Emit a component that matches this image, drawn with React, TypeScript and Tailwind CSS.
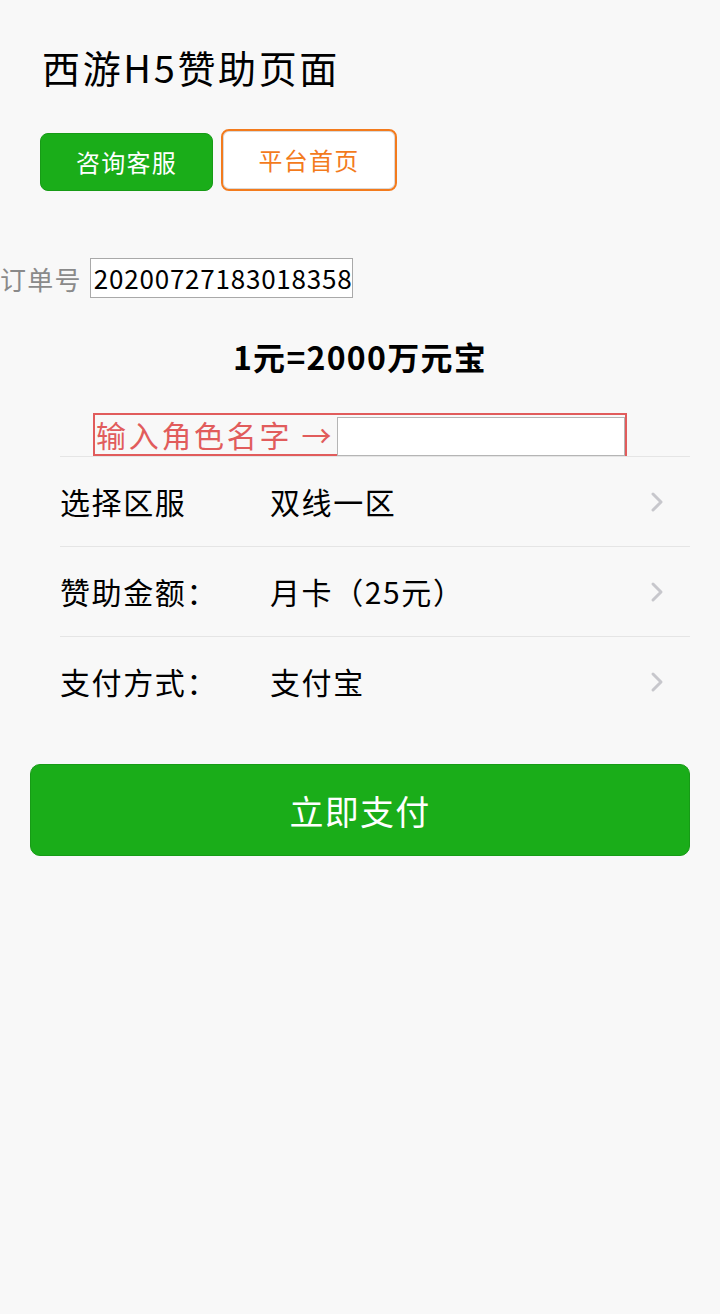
const ROWS = [
  { label: '选择区服', value: '双线一区' },
  { label: '赞助金额：', value: '月卡（25元）' },
  { label: '支付方式：', value: '支付宝' },
];

function Chevron() {
  return (
    <svg width="14" height="22" viewBox="0 0 14 22" className="mr-[26px]">
      <path d="M3 3l8 8-8 8" fill="none" stroke="#c7c7cc" strokeWidth="3" strokeLinecap="round" strokeLinejoin="round" />
    </svg>
  );
}

export default function App() {
  return (
    <div
      className="min-h-[1314px] bg-[#f8f8f8] text-black tracking-[0.08em]"
      style={{ fontFamily: '"Noto Sans CJK SC", "Noto Sans", sans-serif' }}
    >
      {/* Header */}
      <div className="px-[42px] pt-[40px]">
        <h1 className="text-[38px] leading-[54px] font-normal tracking-[0.07em]">西游H5赞助页面</h1>
      </div>

      <div className="flex items-end gap-[8px] px-[40px] mt-[35px]">
        <button className="w-[173px] h-[58px] rounded-[8px] bg-[#1aad19] border border-[#179b16] text-white text-[24px]">
          咨询客服
        </button>
        <button className="w-[176px] h-[62px] rounded-[8px] bg-white border-2 border-[#f37b1d] text-[#f37b1d] text-[24px] shadow-[inset_0_0_0_1px_#d9d9d9]">
          平台首页
        </button>
      </div>

      {/* Order number */}
      <div className="flex items-center mt-[67px] h-[40px]">
        <span className="text-[26px] text-[#8a8a8a] mr-[8px]">订单号</span>
        <div className="w-[263px] h-[40px] bg-white border border-[#a9a9a9] overflow-hidden whitespace-nowrap text-[26px] leading-[38px] pl-[3px] tracking-[0.03em]">
          2020072718301835862
        </div>
      </div>

      <div className="text-center font-bold text-[32px] mt-[38px] leading-[40px]">1元=2000万元宝</div>

      {/* Role name */}
      <div className="flex justify-center mt-[37px]">
        <div className="flex items-end w-[534px] h-[43px] border-2 border-[#e15c5c]">
          <span className="text-[30px] leading-[40px] text-[#e15c5c] pl-[1px] pr-[3px] whitespace-nowrap tracking-[0.09em]">
            输入角色名字 →
          </span>
          <div className="flex-1 h-[39px] bg-white border border-[#b5b5b5] -mb-[2px]" />
        </div>
      </div>

      {/* Options */}
      <div className="ml-[60px] mr-[30px]">
        {ROWS.map((row) => (
          <div key={row.label} className="flex items-center h-[90px] border-t border-[#e5e5e5] tracking-[0.1em]">
            <span className="w-[210px] text-[30px]">{row.label}</span>
            <span className="flex-1 text-[30px]">{row.value}</span>
            <Chevron />
          </div>
        ))}
      </div>

      <div className="px-[30px] mt-[38px]">
        <button className="w-full h-[92px] rounded-[10px] bg-[#1aad19] border border-[#179b16] text-white text-[34px]">
          立即支付
        </button>
      </div>
    </div>
  );
}
